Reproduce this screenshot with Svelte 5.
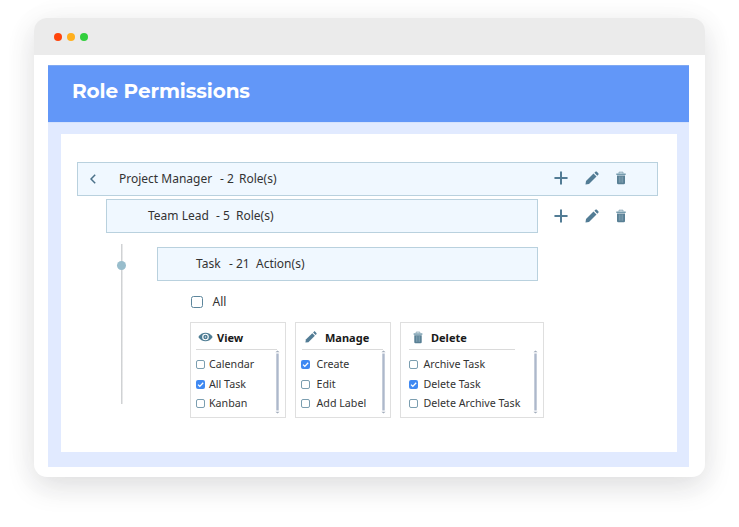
<script>
  const groups = [
    { name: 'View', icon: 'eye', cls: 'view', items: [['Calendar', false], ['All Task', true], ['Kanban', false]] },
    { name: 'Manage', icon: 'pencil', cls: 'manage', items: [['Create', true], ['Edit', false], ['Add Label', false]] },
    { name: 'Delete', icon: 'trash', cls: 'delete', items: [['Archive Task', false], ['Delete Task', true], ['Delete Archive Task', false]] }
  ];
</script>

{#snippet icon(kind)}
  {#if kind === 'plus'}
    <svg class="plus" viewBox="0 0 14 14"><path d="M7 1.200v11.600M1.200 7h11.600" stroke="#527c95" stroke-width="2" stroke-linecap="round" /></svg>
  {:else if kind === 'pencil'}
    <svg class="pencil" viewBox="0 0 14 14" fill="#527c95"><path d="M.5 13.5l.5-3.600L8.500 2.600l3 3L4 13z" /><path d="M9.400 1.800l1-1c.5-.5 1-.5 1.500 0l1.400 1.400c.5.5.5 1 0 1.500l-1 1z" /></svg>
  {:else if kind === 'trash'}
    <svg class="trash" viewBox="0 0 10 14"><path d="M3 2.500V1.200h4v1.300" fill="none" stroke="#8aa9b8" /><path d="M.3 2.500h9.400v1.600H.3z" fill="#759bad" /><path d="M1 4.500h8V12q0 1.200-1.200 1.200H2.200Q1 13.200 1 12z" fill="#587f94" /><path d="M3.300 5.500v6.200M5 5.500v6.200M6.700 5.500v6.200" stroke="#9ab6c5" stroke-width=".6" /></svg>
  {:else}
    <svg class="eye" viewBox="0 0 15 10"><path d="M.3 5C3.500-.7 11.500-.7 14.700 5 11.500 10.700 3.500 10.700.3 5z" fill="#4f7d94" /><circle cx="7.500" cy="5" r="3.300" fill="#fff" /><circle cx="7.500" cy="5" r="2.200" fill="#4f7d94" /><circle cx="7.500" cy="5" r=".7" fill="#dce8ee" /></svg>
  {/if}
{/snippet}

{#snippet check(on)}
  <span class="box" class:on>
    {#if on}<svg viewBox="0 0 9 9"><path d="M2 4.600l1.800 1.800L7.200 2.700" fill="none" stroke="#fff" stroke-width="1.300" /></svg>{/if}
  </span>
{/snippet}

{#snippet tools()}
  <div class="tools">{@render icon('plus')}{@render icon('pencil')}{@render icon('trash')}</div>
{/snippet}

<div class="stage">
  <div class="window">
    <div class="chrome"><i class="red"></i><i class="amber"></i><i class="green"></i></div>
    <div class="app">
      <header><h1>Role Permissions</h1></header>
      <main>
        <div class="row pm">
          <svg class="back" viewBox="0 0 6 10"><path d="M5.200.7L1 5l4.200 4.300" fill="none" stroke="#4b7189" stroke-width="1.500" /></svg>
          <span class="name">Project Manager</span><span class="count">- 2</span><span>Role(s)</span>
          {@render tools()}
        </div>
        <div class="line">
          <div class="row lead"><span class="name">Team Lead</span><span class="count">- 5</span><span>Role(s)</span></div>
          {@render tools()}
        </div>
        <div class="branch">
          <div class="rail"><i></i></div>
          <div class="content">
            <div class="row task"><span class="name">Task</span><span class="count">- 21</span><span>Action(s)</span></div>
            <div class="all">{@render check(false)}<span>All</span></div>
            <div class="cards">
              {#each groups as g}
                <section class={g.cls}>
                  <div class="head"><span class="ic">{@render icon(g.icon)}</span><b>{g.name}</b></div>
                  <ul>
                    {#each g.items as [label, on]}
                      <li>{@render check(on)}<span>{label}</span></li>
                    {/each}
                  </ul>
                  <svg class="scroll" viewBox="0 0 5 64"><path d="M.4 2.300L2.500.4l2.100 1.900zM.4 61.700l2.100 1.900 2.100-1.900z" fill="#a2adbc" /><path d="M1.300 3.500h2.400v57H1.300z" fill="#adb8cb" /></svg>
                </section>
              {/each}
            </div>
          </div>
        </div>
      </main>
    </div>
  </div>
</div>

<style>
  :global(body) { background: #fff; }
  * { box-sizing: border-box; }
  svg { display: block; flex: none; }
  .stage { width: 739px; height: 527px; padding: 18px 34px 50px; overflow: hidden; font-family: "Noto Sans", sans-serif; color: #333; }
  .window { height: 459px; border-radius: 13px; background: #fff; overflow: hidden; box-shadow: 0 10px 28px rgba(20, 20, 35, .125), 0 2px 40px rgba(20, 20, 35, .03); }
  .chrome { height: 37px; background: #ebebeb; display: flex; gap: 5px; padding: 15px 0 0 20px; }
  .chrome i { width: 8px; height: 8px; border-radius: 50%; }
  .red { background: #ff450c; }
  .amber { background: #ffb01e; }
  .green { background: #32cf3d; }
  .app { margin: 10px 16px 0 14px; height: 402px; background: #e1eaff; }
  header { height: 58px; background: #6297f8; border-top: 1px solid #80a9f2; border-bottom: 1px solid #d5e2fc; padding: 11px 0 0 24px; }
  h1 { margin: 0; font: 700 20px/29px "Montserrat", "Inter", sans-serif; letter-spacing: -.1px; color: #fff; white-space: nowrap; }
  main { margin: 11px 12px 0 13px; height: 318px; background: #fff; padding: 28px 0 0 16px; }
  .row { display: flex; align-items: center; height: 34px; background: #f0f8ff; border: 1px solid #b9d1de; font-size: 12px; line-height: 18px; white-space: nowrap; }
  .pm { width: 580.500px; padding-left: 12px; }
  .back { width: 6px; height: 10px; margin-right: 23px; }
  .pm .name { width: 101px; }
  .pm .count { width: 19px; }
  .tools { display: flex; align-items: center; gap: 17px; }
  .tools .plus { width: 14px; height: 14px; }
  .tools .pencil { width: 14px; height: 14px; }
  .tools .trash { width: 10px; height: 14px; }
  .pm .tools { margin: 0 31px 2px auto; }
  .line { display: flex; align-items: center; gap: 16px; margin: 3px 0 0 29px; }
  .lead { width: 432px; padding-left: 41px; }
  .lead .name { width: 68px; }
  .lead .count { width: 20px; }
  .branch { display: flex; margin-top: 11px; padding-left: 40px; }
  .rail { width: 9px; height: 160px; margin-right: 31px; padding-top: 17px; background: linear-gradient(#d0d2d4, #d0d2d4) 4px 0 / 1.500px 100% no-repeat; }
  .rail i { display: block; width: 9px; height: 9px; border-radius: 50%; background: #98bdcc; }
  .content { padding-top: 3px; }
  .task { width: 381px; padding-left: 38px; }
  .task .name { width: 33px; }
  .task .count { width: 27px; }
  .all { display: flex; align-items: center; height: 41px; padding-left: 33.500px; font-size: 12px; }
  .box { flex: none; width: 9px; height: 9px; border: 1px solid #7b9eb0; border-radius: 2px; background: #fff; }
  .all .box { width: 12px; height: 12px; border: 1px solid #5d869c; border-radius: 2.500px; margin-right: 10px; }
  .box.on { border: 0; background: #3f89f2; }
  .cards { display: flex; gap: 9px; padding-left: 33px; }
  section { position: relative; width: 96px; height: 96px; border: 1px solid #dfdfdf; padding: 0 5px; }
  .head { display: flex; align-items: center; width: 81px; height: 27px; border-bottom: 1px solid #dadada; padding-top: 2px; font-size: 11px; color: #191919; }
  .ic { width: 20px; flex: none; }
  .eye { width: 15px; height: 10px; margin-left: 2px; }
  .head .pencil { width: 12px; height: 12px; }
  .head .trash { width: 10px; height: 13px; }
  .view b { margin-left: 1px; }
  .manage .head { padding-left: 3px; margin-left: 1px; }
  .manage b { margin-left: 0; }
  .delete { width: 144px; padding-left: 8px; }
  .delete .head { width: 106px; padding-left: 4px; }
  .delete b { margin-left: -2px; }
  ul { list-style: none; margin: 5px 0 0; padding: 0; font-size: 10.700px; line-height: 19px; white-space: nowrap; }
  li { display: flex; align-items: center; height: 19.400px; }
  li .box { margin-right: 4px; }
  .manage li .box { margin-right: 6.500px; }
  .delete li .box { margin-right: 5.500px; }
  .scroll { position: absolute; right: 5.500px; top: 27px; width: 5px; height: 64px; }
  .manage .scroll { right: 4.500px; }
</style>
